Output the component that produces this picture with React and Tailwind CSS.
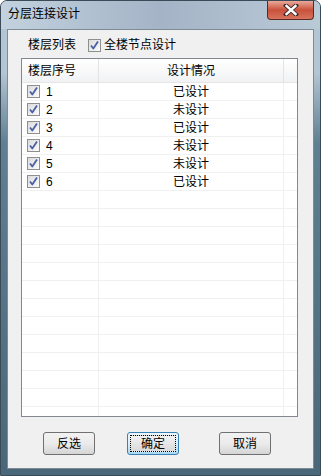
import React from 'react'

const font = { fontFamily: '"Liberation Sans", "Noto Sans CJK SC", sans-serif' }

const rows = [
  { n: '1', s: '已设计' },
  { n: '2', s: '未设计' },
  { n: '3', s: '已设计' },
  { n: '4', s: '未设计' },
  { n: '5', s: '未设计' },
  { n: '6', s: '已设计' },
]

function Check() {
  return (
    <div className="w-[13px] h-[13px] border border-[#8e8f8f] bg-gradient-to-br from-[#dcdcdc] to-[#fbfbfb] flex items-center justify-center shrink-0">
      <svg width="11" height="11" viewBox="0 0 11 11">
        <path d="M2 5.5 L4.3 8.5 L9 1.5" fill="none" stroke="#4a5fa5" strokeWidth="1.8" strokeLinejoin="round" />
      </svg>
    </div>
  )
}

function Button({ label, primary }) {
  return (
    <div
      className={`w-[52px] h-[23px] rounded-[3px] border flex items-center justify-center text-[12px] text-black ${
        primary
          ? 'border-[#3c7fb1] bg-gradient-to-b from-[#eaf6fd] via-[#d9f0fc] to-[#a7d9f5] p-[2px]'
          : 'border-[#707070] bg-gradient-to-b from-[#f2f2f2] via-[#ebebeb] to-[#d5d5d5]'
      }`}
    >
      {primary ? (
        <div className="w-full h-full border border-dotted border-black flex items-center justify-center bg-gradient-to-b from-[#f2f2f2] to-[#dadada]">
          {label}
        </div>
      ) : (
        label
      )}
    </div>
  )
}

export default function App() {
  return (
    <div
      className="w-[321px] h-[476px] rounded-t-[7px] border border-[#3b4a57] bg-gradient-to-b from-[#b4c6d4] from-15% via-[#5f7f92] via-30% to-[#4a6779] flex flex-col overflow-hidden"
      style={font}
    >
      {/* Title bar */}
      <div className="h-[28px] shrink-0 flex items-start justify-between bg-gradient-to-r from-[#c3d2de] via-[#a4b3c6] to-[#b9cad7]">
        <span className="pl-[7px] pt-[4px] text-[12px] text-black">分层连接设计</span>
        <div className="mr-[6px] w-[47px] h-[19px] rounded-b-[4px] border border-t-0 border-[#5d2a22] bg-gradient-to-b from-[#e9a99a] via-[#c9503b] to-[#d8735e] flex items-center justify-center">
          <svg width="16" height="12" viewBox="0 0 16 12">
            <path d="M3 1.5 L13 10.5 M13 1.5 L3 10.5" stroke="#3a2a2a" strokeWidth="4.2" strokeLinecap="square" />
            <path d="M3.5 2 L12.5 10 M12.5 2 L3.5 10" stroke="#ffffff" strokeWidth="2.4" strokeLinecap="square" />
          </svg>
        </div>
      </div>

      {/* Client area */}
      <div className="mx-[6px] mb-[6px] flex-1 border border-[#7d8b96] bg-[#f0f0f0] flex flex-col text-[12px] text-black">
        <div className="h-[28px] flex items-center pl-[20px] pt-[2px]">
          <span>楼层列表</span>
          <div className="ml-[12px] flex items-center gap-[3px]">
            <Check />
            <span>全楼节点设计</span>
          </div>
        </div>

        {/* List */}
        <div className="ml-[13px] w-[277px] h-[359px] border border-[#828790] bg-white overflow-hidden flex flex-col">
          <div className="h-[24px] shrink-0 flex bg-gradient-to-b from-[#ffffff] to-[#f1f2f4] border-b border-[#e5e5e5]">
            <div className="w-[77px] border-r border-[#e3e3e3] flex items-center pl-[6px]">楼层序号</div>
            <div className="w-[185px] border-r border-[#e3e3e3] flex items-center justify-center">设计情况</div>
            <div className="flex-1" />
          </div>
          {rows.map((r) => (
            <div key={r.n} className="h-[18px] shrink-0 flex border-b border-[#f0f0f0]">
              <div className="w-[77px] border-r border-[#f0f0f0] flex items-center pl-[5px] gap-[6px]">
                <Check />
                <span>{r.n}</span>
              </div>
              <div className="w-[185px] border-r border-[#f0f0f0] flex items-center justify-center">{r.s}</div>
              <div className="flex-1" />
            </div>
          ))}
          {Array.from({ length: 14 }).map((_, i) => (
            <div key={i} className="h-[18px] shrink-0 flex border-b border-[#f0f0f0]">
              <div className="w-[77px] border-r border-[#f0f0f0]" />
              <div className="w-[185px] border-r border-[#f0f0f0]" />
              <div className="flex-1" />
            </div>
          ))}
        </div>

        <div className="mt-[15px] flex pl-[35px] gap-[32px]">
          <Button label="反选" />
          <div className="mr-[8px]">
            <Button label="确定" primary />
          </div>
          <Button label="取消" />
        </div>
      </div>
    </div>
  )
}
